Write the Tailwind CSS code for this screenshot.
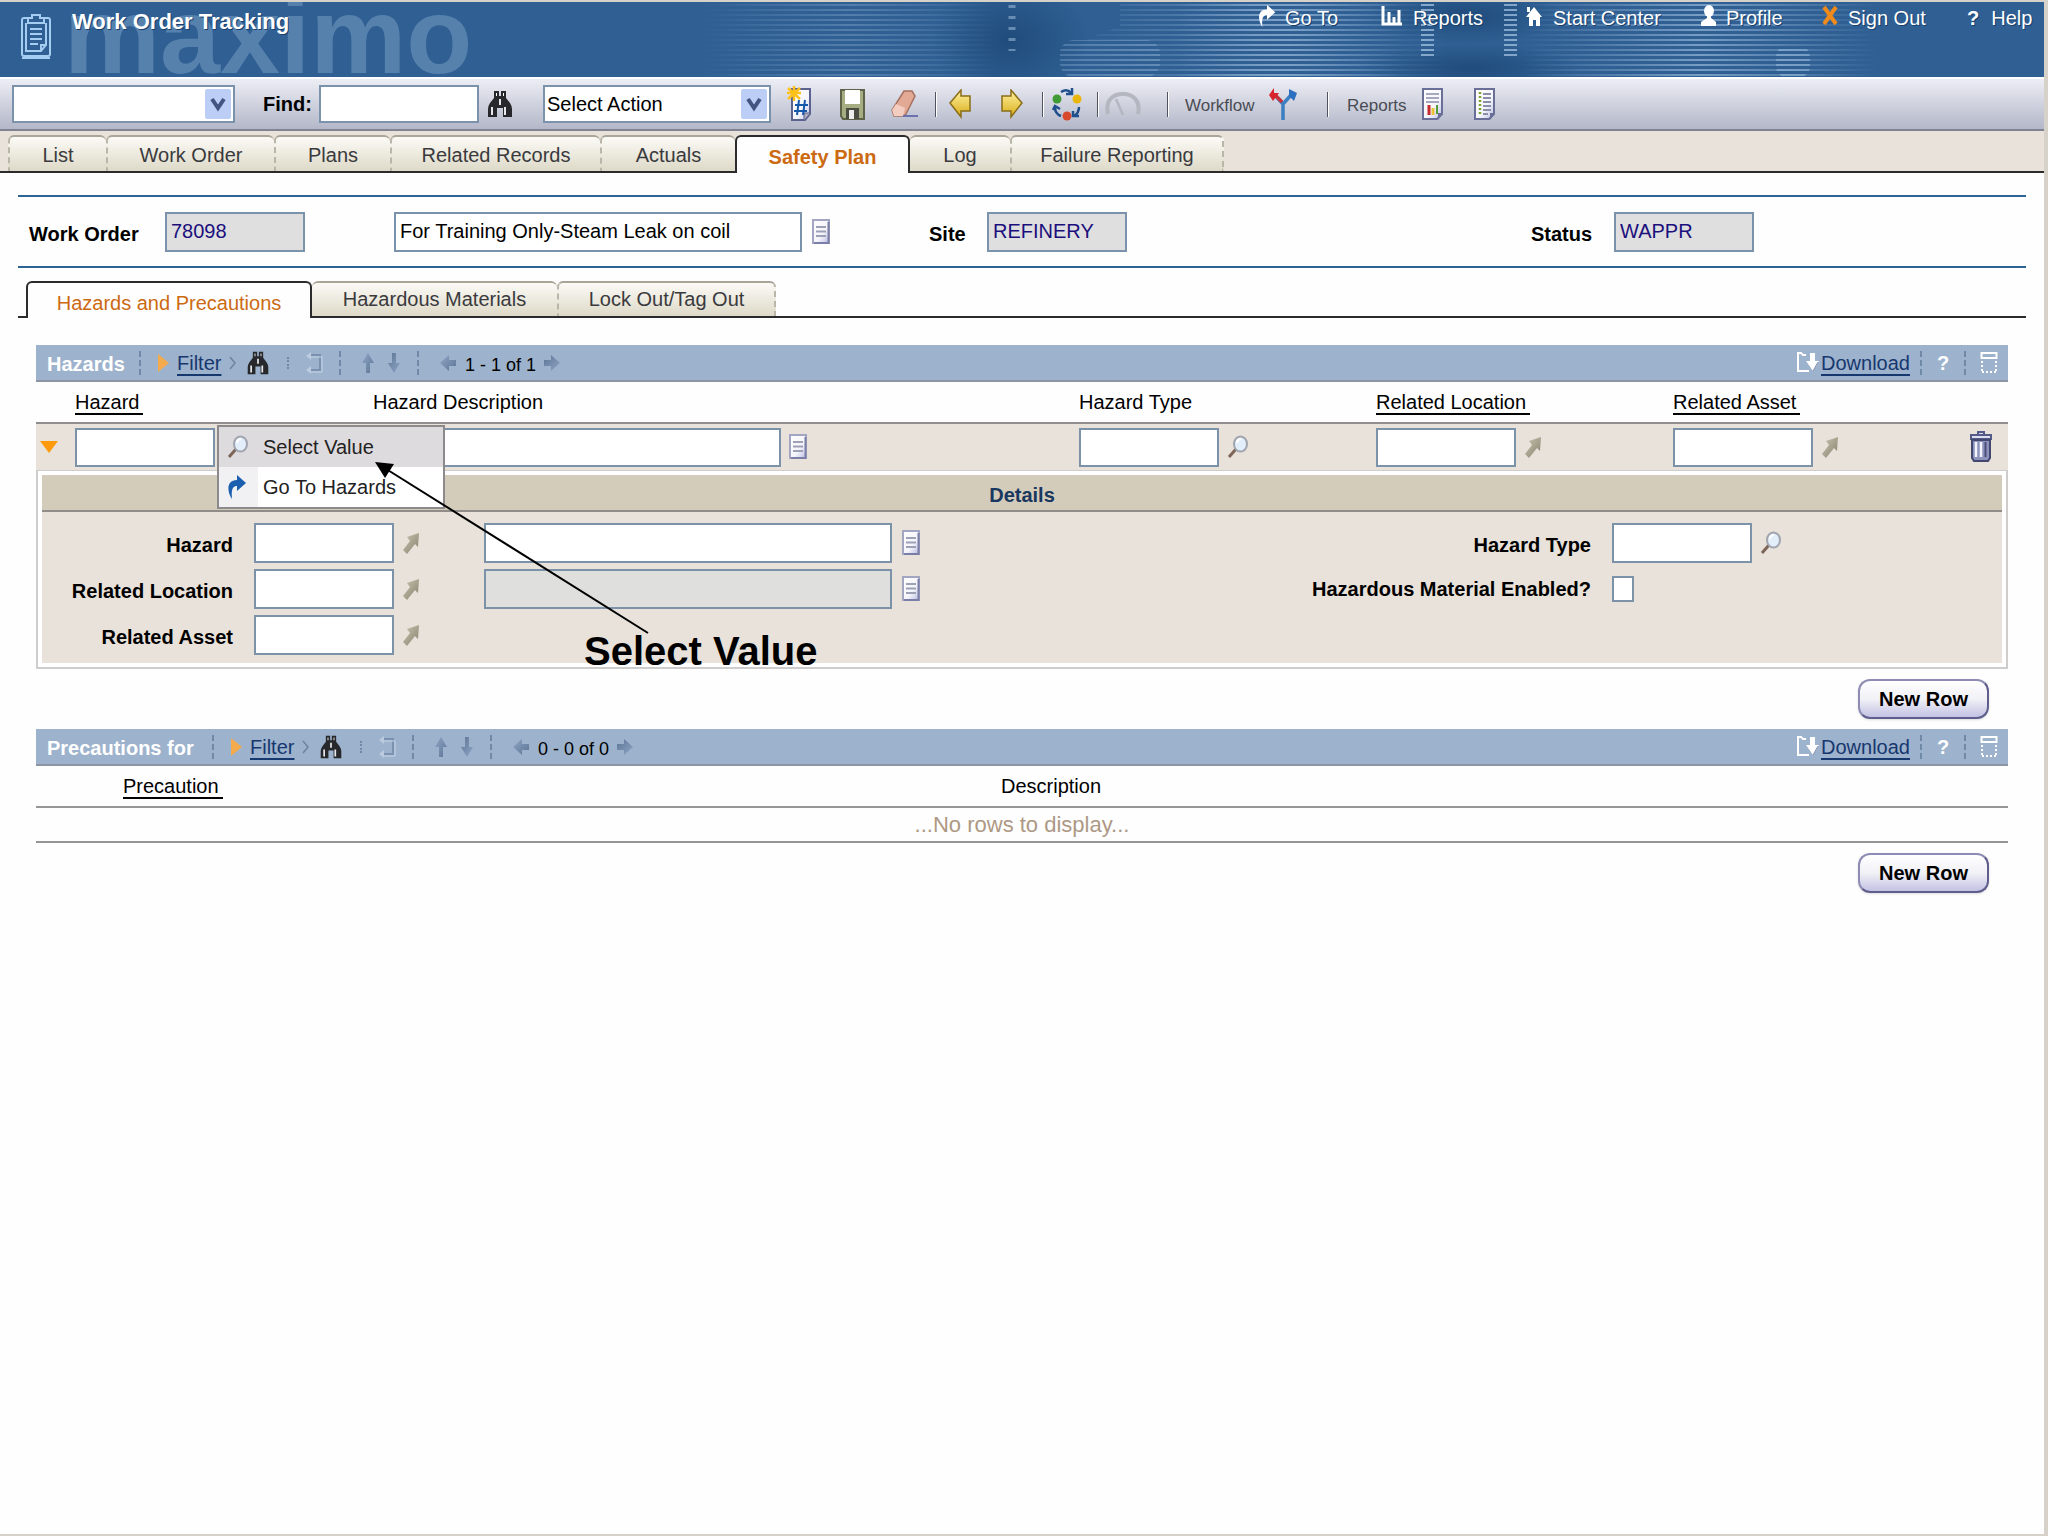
<!DOCTYPE html>
<html lang="en">
<head>
<meta charset="utf-8">
<title>Work Order Tracking</title>
<script src="https://cdn.jsdelivr.net/npm/@tailwindcss/browser@4"></script>
</head>
<body class="min-h-screen flex flex-col bg-[#fefefe] border-t-2 border-r-4 border-b-2 border-[#d6d2ca] font-['Liberation_Sans',Arial,sans-serif] text-[20px] leading-7 text-black">

<!-- Shared icons -->
<svg width="0" height="0" class="absolute" aria-hidden="true">
  <defs>
    <linearGradient id="gDoc" x1="0" y1="0" x2="1" y2="1"><stop offset="0" stop-color="#fff"/><stop offset=".6" stop-color="#f4f4fb"/><stop offset="1" stop-color="#b9bce0"/></linearGradient>
    <linearGradient id="gGold" x1="0" y1="0" x2="0" y2="1"><stop offset="0" stop-color="#fff3a0"/><stop offset="1" stop-color="#d9ac18"/></linearGradient>
    <linearGradient id="gSteel" x1="0" y1="0" x2="1" y2="1"><stop offset="0" stop-color="#8fa6c6"/><stop offset="1" stop-color="#5d7595"/></linearGradient>
    <linearGradient id="gTan" x1="0" y1="0" x2="1" y2="1"><stop offset="0" stop-color="#c9c5b0"/><stop offset="1" stop-color="#86826f"/></linearGradient>
  </defs>
  <symbol id="binoculars" viewBox="0 0 26 28">
    <path d="M7 1h5v5h2V1h5v7l4 5q2 3 2 6v8h-9v-9h-6v9H1v-8q0-3 2-6l4-5z" fill="#26282c"/>
    <path d="M4 17h2v8H4zM17 17h2v8h-2zM12 9h2v6h-2z" fill="#e8e8ec"/>
    <path d="M9 3h1v3H9zM16 3h1v3h-1z" fill="#fff"/>
  </symbol>
  <symbol id="note" viewBox="0 0 18 26">
    <rect x="1" y="1" width="16" height="23" fill="url(#gDoc)" stroke="#a3a6c2" stroke-width="2"/>
    <path d="M16.500 3v21H2" fill="none" stroke="#7b7ea6" stroke-width="2"/>
    <path d="M4 8h10M4 12.500h10M4 17h10" stroke="#9da1b6" stroke-width="2"/>
  </symbol>
  <symbol id="lens" viewBox="0 0 22 24">
    <path d="M2 22l7-8" stroke="#7c6557" stroke-width="3"/>
    <ellipse cx="13.500" cy="9" rx="6.500" ry="7.500" fill="#e3eefb" stroke="#9fa4ae" stroke-width="2"/>
    <path d="M10 8c0-3 2-4 4-4" stroke="#fff" stroke-width="2" fill="none"/>
  </symbol>
  <symbol id="goto" viewBox="0 0 18 24">
    <path d="M17 2L5 6l3 4-7 9 4 4 8-10 3 3z" fill="url(#gTan)"/>
  </symbol>
  <symbol id="jump" viewBox="0 0 20 26">
    <path d="M10 1l9 8-9 8v-5c-4 0-6 3-5 13C0 18-1 6 10 6z"/>
  </symbol>
  <symbol id="vsort" viewBox="0 0 14 22"><path d="M7 1l6 10H9v10H5V11H1z" fill="url(#gSteel)"/></symbol>
  <symbol id="hpage" viewBox="0 0 18 18"><path d="M1 9l9-8v5h7v6h-7v5z" fill="url(#gSteel)"/></symbol>
  <symbol id="clear" viewBox="0 0 18 22"><path d="M4 3h11v15H4" fill="none" stroke="#7a91b0" stroke-width="2"/><path d="M6 5h11v15H6" fill="none" stroke="#c7d5e6" stroke-width="1"/><path d="M1 4l5-4v8zM1 18l5-4v8z" fill="#bccbdf"/></symbol>
  <symbol id="download" viewBox="0 0 24 24">
    <path d="M10 4H7L5 2H2v18h11" fill="none" stroke="#fff" stroke-width="2"/>
    <path d="M14 2h5v8h4l-6 10-7-10h4z" fill="#fff"/><path d="M22 11l-5 9" stroke="#8791b0" stroke-width="1"/>
  </symbol>
  <symbol id="collapse" viewBox="0 0 18 24">
    <rect x="1.500" y="2" width="15" height="5" fill="none" stroke="#fff" stroke-width="2"/>
    <path d="M2 10v12M16 10v12M2 21h15" fill="none" stroke="#fff" stroke-width="2" stroke-dasharray="2 2"/>
  </symbol>
  <symbol id="chevron" viewBox="0 0 26 30">
    <rect width="26" height="30" rx="2" fill="#bccdf6"/><path d="M7 10l6 9 6-9" fill="none" stroke="#42547f" stroke-width="4"/>
  </symbol>
</svg>

<header class="relative h-[75px] shrink-0 overflow-hidden bg-[#2f5f93] text-white">
  <svg class="absolute inset-0 h-full w-full" viewBox="0 0 2044 75" preserveAspectRatio="xMaxYMin slice" aria-hidden="true">
    <defs>
      <pattern id="lines" width="8" height="5" patternUnits="userSpaceOnUse"><rect y="2" width="8" height="2" fill="#a9c8e6"/></pattern>
      <linearGradient id="fade"><stop offset="0" stop-color="#fff" stop-opacity="0"/><stop offset=".5" stop-color="#fff"/><stop offset="1" stop-color="#fff" stop-opacity="0"/></linearGradient>
      <mask id="mFade" maskContentUnits="objectBoundingBox"><rect width="1" height="1" fill="url(#fade)"/></mask>
      <radialGradient id="dark"><stop offset="0" stop-color="#163f6c" stop-opacity=".6"/><stop offset="1" stop-color="#163f6c" stop-opacity="0"/></radialGradient>
    </defs>
    <ellipse cx="1010" cy="38" rx="80" ry="60" fill="url(#dark)"/>
    <ellipse cx="1470" cy="66" rx="110" ry="24" fill="url(#dark)"/>
    <ellipse cx="1465" cy="14" rx="100" ry="28" fill="url(#dark)"/>
    <rect x="700" width="300" height="75" fill="url(#lines)" opacity=".3" mask="url(#mFade)"/>
    <path d="M1060 75c4-24 22-40 60-50v-25h330v75z" fill="url(#lines)" opacity=".4" mask="url(#mFade)"/>
    <rect x="1060" y="38" width="100" height="37" rx="14" fill="url(#lines)" opacity=".28"/>
    <rect x="1175" y="0" width="230" height="75" fill="url(#lines)" opacity=".45" mask="url(#mFade)"/>
    <rect x="1520" y="0" width="360" height="75" fill="url(#lines)" opacity=".6" mask="url(#mFade)"/>
    <rect x="1776" y="44" width="34" height="31" rx="10" fill="url(#lines)" opacity=".45"/>
    <rect x="1421" width="13" height="55" fill="url(#lines)" opacity=".7"/>
    <rect x="1504" width="13" height="55" fill="url(#lines)" opacity=".7"/>
    <path d="M1012 3v46" stroke="#a9c8e6" stroke-width="7" stroke-dasharray="3 8" opacity=".5"/>
  </svg>
  <span class="absolute -top-5 left-16 text-[108px] leading-[108px] font-bold text-[#87abcf]/45" aria-hidden="true">maximo</span>
  <div class="relative flex">
    <svg class="ml-5 mt-2.5 h-12 w-8" viewBox="0 0 32 48" fill="none" stroke="#a5cdf2" stroke-width="2" aria-hidden="true">
      <path d="M8 6H4q-2 0-2 2v34q0 2 2 2h24q2 0 2-2V8q0-2-2-2h-4M12 3h8v3h4v5H8V6h4zM6 11v28h15l5-6V11M21 39v-6h5M2 46h28"/><path d="M10 17h12M10 22h12M10 27h12M10 32h8"/>
    </svg>
    <h1 class="ml-5 mt-1.5 text-[22px] leading-7 font-bold [text-shadow:1px_1px_0_#17406d]">Work Order Tracking</h1>
    <nav class="ml-auto mt-0.5 flex leading-7 [text-shadow:1px_1px_0_#17406d]">
      <a href="#" class="flex w-31 gap-2"><svg class="h-6 w-5" fill="#fff" aria-hidden="true"><use href="#jump"/></svg>Go To</a>
      <a href="#" class="flex w-36 gap-2.5"><svg class="h-6 w-[22px]" viewBox="0 0 22 24" fill="none" stroke="#fff" stroke-width="3" aria-hidden="true"><path d="M2 2v18h19"/><path d="M8 8v11M13 13v6M18 6v13"/></svg>Reports</a>
      <a href="#" class="flex w-[175px] gap-2.5"><svg class="h-6 w-[18px]" viewBox="0 0 18 24" fill="#fff" aria-hidden="true"><path d="M9 3l8 10h-2v9h-4v-6H8v6H4v-9H1zM2 3h3v5H2z"/></svg>Start Center</a>
      <a href="#" class="flex w-[122px] gap-2"><svg class="h-6 w-[18px]" viewBox="0 0 18 24" fill="#fff" aria-hidden="true"><ellipse cx="9" cy="7" rx="5" ry="6"/><path d="M7 11h4v3l5 4v4H1v-4l6-4z"/></svg>Profile</a>
      <a href="#" class="flex w-[145px] gap-2.5"><svg class="h-6 w-4" viewBox="0 0 16 24" stroke="#ef8a1b" stroke-width="4" aria-hidden="true"><path d="M2 3l12 17M14 3L2 20"/></svg>Sign Out</a>
      <a href="#" class="flex w-[77px] gap-3"><b>?</b>Help</a>
    </nav>
  </div>
</header>

<div class="flex h-[54px] shrink-0 items-center border-t-2 border-b-2 border-t-white border-b-[#7f8393] bg-linear-to-b from-[#edeef5] to-[#b3b7c8] pl-3">
  <div class="relative w-[223px]">
    <select aria-label="Saved query" class="block h-[38px] w-full appearance-none border-2 border-[#7b92ad] bg-white"><option></option></select>
    <svg class="pointer-events-none absolute top-1 right-1 h-[30px] w-[26px]" aria-hidden="true"><use href="#chevron"/></svg>
  </div>
  <label for="find" class="ml-7 w-14 font-bold">Find:</label>
  <input id="find" class="h-[38px] w-40 border-2 border-[#7b92ad] bg-white px-1">
  <button class="ml-2" aria-label="Find"><svg class="block h-7 w-[26px]"><use href="#binoculars"/></svg></button>
  <div class="relative ml-[30px] w-[228px]">
    <select aria-label="Action" class="block h-[38px] w-full appearance-none border-2 border-[#7b92ad] bg-white px-0.5"><option>Select Action</option></select>
    <svg class="pointer-events-none absolute top-1 right-1 h-[30px] w-[26px]" aria-hidden="true"><use href="#chevron"/></svg>
  </div>
  <button class="ml-4 w-[52px]" aria-label="New work order"><svg class="block h-[36px] w-[26px]" viewBox="0 0 26 36"><path d="M5 3h18v25l-5 6H5z" fill="url(#gDoc)" stroke="#5c6290" stroke-width="2"/><path d="M23 27h-6v7" fill="#aab" stroke="#5c6290"/><path d="M12 14l-2 15M18 14l-2 15M8 19h13M7 25h13" stroke="#1557a8" stroke-width="2"/><path d="M7 0v15M1 2l12 11M13 2L1 13M0 7h14" stroke="#ffc21a" stroke-width="2.500"/></svg></button>
  <button class="w-[51px]" aria-label="Save"><svg class="block h-8 w-7" viewBox="0 0 28 32"><path d="M2 2h23v29H4l-2-3z" fill="#a7ad83" stroke="#5d6248" stroke-width="2"/><path d="M6 2h15v14H6z" fill="#fff"/><path d="M7 20h13v11H7z" fill="#4a4e42"/><path d="M10 22h5v9h-5z" fill="#eee"/></svg></button>
  <button class="w-[45px]" aria-label="Clear changes"><svg class="block h-8 w-[30px]" viewBox="0 0 30 32"><path d="M14 3h8l3 5-9 18-3 2H4l-2-6z" fill="#e2aa95" stroke="#a5705f" stroke-width="1.500"/><path d="M2 22l4-6 9 4-2 8H4z" fill="#f3cdbf"/><path d="M13 28h15" stroke="#6a70b0" stroke-width="2"/></svg></button>
  <i class="h-[25px] w-0.5 border-r border-l border-r-white border-l-[#50525c]"></i>
  <button class="ml-3 w-[52px]" aria-label="Previous record"><svg class="block h-[30px] w-[22px]" viewBox="0 0 22 30"><path d="M1 14L12 1v6h9v15h-9v6z" fill="url(#gGold)" stroke="#8a6d18" stroke-width="1.500"/></svg></button>
  <button class="w-[41px]" aria-label="Next record"><svg class="block h-[30px] w-[22px]" viewBox="0 0 22 30"><path d="M21 14L10 1v6H1v15h9v6z" fill="url(#gGold)" stroke="#8a6d18" stroke-width="1.500"/></svg></button>
  <i class="h-[25px] w-0.5 border-r border-l border-r-white border-l-[#50525c]"></i>
  <button class="ml-2 w-[45px]" aria-label="Change status"><svg class="block h-[34px] w-[30px]" viewBox="0 0 30 34"><circle cx="5" cy="12" r="4.500" fill="#3f9b33"/><circle cx="25" cy="12" r="4.500" fill="#e9b60e"/><circle cx="15" cy="29" r="4.500" fill="#d8482c"/><path d="M9 5q6-4 10 1M20 1v6h-6M3 20q0 7 6 9M1 23l2-4 5 3M27 20q0 6-5 9M21 24v5h6" fill="none" stroke="#1f4f8c" stroke-width="2.500"/></svg></button>
  <i class="h-[25px] w-0.5 border-r border-l border-r-white border-l-[#50525c]"></i>
  <button class="ml-1.5 w-[62px]" aria-label="Gauge"><svg class="block h-7 w-9" viewBox="0 0 36 28" fill="none" stroke="#b4b6c0" stroke-width="4"><path d="M3 24C0 10 8 4 18 4s18 7 15 20"/><path d="M11 9l7 16" stroke-width="2.500"/></svg></button>
  <i class="h-[25px] w-0.5 border-r border-l border-r-white border-l-[#50525c]"></i>
  <span class="ml-4 w-[83px] pt-1 text-[17px] text-[#4a4c54]">Workflow</span>
  <button class="w-[59px]" aria-label="Route workflow"><svg class="block h-[34px] w-[30px]" viewBox="0 0 30 34" fill="none"><path d="M15 33V17L6 7M15 17l9-10" stroke="#3c7fc0" stroke-width="3.500"/><path d="M14 15L7 8" stroke="#c8333b" stroke-width="3.500"/><path d="M1 8l5-7v5h5l-6 8z" fill="#d8242c"/><path d="M21 2l8 4-3 8-5-5z" fill="#2b6fc0"/></svg></button>
  <i class="h-[25px] w-0.5 border-r border-l border-r-white border-l-[#50525c]"></i>
  <span class="ml-[18px] w-[74px] pt-1 text-[17px] text-[#4a4c54]">Reports</span>
  <button class="w-[52px]" aria-label="Run reports"><svg class="block h-[34px] w-6" viewBox="0 0 24 34"><path d="M2 2h19v25l-5 5H2z" fill="url(#gDoc)" stroke="#6a6f97" stroke-width="2"/><path d="M5 7h13M5 11h13M5 15h13" stroke="#8a8ea8" stroke-width="1.500"/><path d="M8 18v10" stroke="#c62a2a" stroke-width="3"/><path d="M12 21v7" stroke="#e9c23a" stroke-width="3"/><path d="M16 18v9" stroke="#4f9a3c" stroke-width="2"/><path d="M22 26h-5v7z" fill="#6a6f97"/></svg></button>
  <button aria-label="Report list"><svg class="block h-[34px] w-6" viewBox="0 0 24 34"><path d="M2 2h19v25l-5 5H2z" fill="url(#gDoc)" stroke="#6a6f97" stroke-width="2"/><path d="M10 7h8M10 11h8M10 15h8M10 19h8M10 23h8M10 27h5" stroke="#8a8ea8" stroke-width="2"/><path d="M7 5v24" stroke="#7aa32c" stroke-width="2.500" stroke-dasharray="2 2"/><path d="M22 26h-5v7z" fill="#6a6f97"/></svg></button>
</div>

<nav class="flex h-[42px] shrink-0 items-end border-b-2 border-[#2b2b2b] bg-[#e8e2da] pl-2 text-[#3a3a3e]" aria-label="Main tabs">
  <a href="#" class="h-9 w-[98px] rounded-t-md border-t-2 border-l-2 border-t-[#a9a598] border-l-[#b9b5a8] [border-left-style:dashed] bg-linear-to-b from-[#fbfaf6] to-[#dedac8] pt-1 text-center">List</a>
  <a href="#" class="h-9 w-[168px] rounded-t-md border-t-2 border-l-2 border-t-[#a9a598] border-l-[#b9b5a8] [border-left-style:dashed] bg-linear-to-b from-[#fbfaf6] to-[#dedac8] pt-1 text-center">Work Order</a>
  <a href="#" class="h-9 w-[116px] rounded-t-md border-t-2 border-l-2 border-t-[#a9a598] border-l-[#b9b5a8] [border-left-style:dashed] bg-linear-to-b from-[#fbfaf6] to-[#dedac8] pt-1 text-center">Plans</a>
  <a href="#" class="h-9 w-[210px] rounded-t-md border-t-2 border-l-2 border-t-[#a9a598] border-l-[#b9b5a8] [border-left-style:dashed] bg-linear-to-b from-[#fbfaf6] to-[#dedac8] pt-1 text-center">Related Records</a>
  <a href="#" class="h-9 w-[135px] rounded-t-md border-t-2 border-l-2 border-t-[#a9a598] border-l-[#b9b5a8] [border-left-style:dashed] bg-linear-to-b from-[#fbfaf6] to-[#dedac8] pt-1 text-center">Actuals</a>
  <a href="#" aria-current="page" class="-mb-0.5 h-[38px] w-[175px] rounded-t-md border-2 border-b-0 border-[#2b2b2b] bg-[#fefefe] pt-1.5 text-center font-bold text-[#cc6a12]">Safety Plan</a>
  <a href="#" class="h-9 w-[100px] rounded-t-md border-t-2 border-t-[#a9a598] bg-linear-to-b from-[#fbfaf6] to-[#dedac8] pt-1 text-center">Log</a>
  <a href="#" class="h-9 w-[214px] rounded-t-md border-t-2 border-r-2 border-l-2 border-t-[#a9a598] border-x-[#b9b5a8] [border-left-style:dashed] [border-right-style:dashed] bg-linear-to-b from-[#fbfaf6] to-[#dedac8] pt-1 text-center">Failure Reporting</a>
</nav>

<main class="pt-[22px] pr-[18px] pl-[18px]">
  <section class="grid h-[73px] grid-cols-[136px_229px_535fr_58px_544fr_83px_412px] items-center border-y-2 border-[#2f6394] pl-[11px]">
    <label for="wo" class="pt-1 font-bold">Work Order</label>
    <div><input id="wo" readonly value="78098" class="block h-10 w-35 border-2 border-[#7b92ad] bg-[#dfdfe0] px-1 text-[#1b0f7c]"></div>
    <div class="flex items-center gap-2.5"><input aria-label="Work order description" value="For Training Only-Steam Leak on coil" class="h-10 w-[408px] border-2 border-[#7b92ad] bg-white px-1"><button aria-label="Long description"><svg class="block h-[26px] w-[18px]"><use href="#note"/></svg></button></div>
    <label for="site" class="pt-1 font-bold">Site</label>
    <div><input id="site" readonly value="REFINERY" class="block h-10 w-35 border-2 border-[#7b92ad] bg-[#dfdfe0] px-1 text-[#1b0f7c]"></div>
    <label for="status" class="pt-1 font-bold">Status</label>
    <div><input id="status" readonly value="WAPPR" class="block h-10 w-35 border-2 border-[#7b92ad] bg-[#dfdfe0] px-1 text-[#1b0f7c]"></div>
  </section>

  <nav class="mt-[13px] flex h-[37px] items-end border-b-2 border-[#2b2b2b] pl-2 text-[#3a3a3e]" aria-label="Safety plan tabs">
    <a href="#" aria-current="page" class="-mb-0.5 h-[37px] w-[286px] rounded-t-md border-2 border-b-0 border-[#2b2b2b] bg-[#fefefe] pt-1.5 text-center text-[#cc6a12]">Hazards and Precautions</a>
    <a href="#" class="h-[35px] w-[245px] rounded-t-md border-t-2 border-t-[#a9a598] bg-linear-to-b from-[#fbfaf6] to-[#dedac8] pt-0.5 text-center">Hazardous Materials</a>
    <a href="#" class="h-[35px] w-[219px] rounded-t-md border-t-2 border-r-2 border-l-2 border-t-[#a9a598] border-x-[#b9b5a8] [border-left-style:dashed] [border-right-style:dashed] bg-linear-to-b from-[#fbfaf6] to-[#dedac8] pt-0.5 text-center">Lock Out/Tag Out</a>
  </nav>

  <div class="mt-[27px] mr-[18px] ml-[18px]">
    <section>
      <div class="flex h-[37px] items-center border-b-2 border-[#8f95a3] bg-[#9db2cc] pl-[11px]">
        <h2 class="w-[92px] pt-0.5 font-bold text-white">Hazards</h2>
        <i class="h-6 border-l-2 border-dashed border-[#7189a8]"></i>
        <svg class="ml-4 h-[18px] w-3" viewBox="0 0 12 18" aria-hidden="true"><path d="M1 0l11 9L1 18z" fill="#f3ab4e"/></svg>
        <a href="#" class="ml-2 w-12 text-[#17376f] underline decoration-2 underline-offset-4">Filter</a>
        <svg class="ml-1 h-4 w-2" viewBox="0 0 8 16" fill="none" stroke="#71839c" stroke-width="1.500" aria-hidden="true"><path d="M1 2l5 6-5 6"/></svg>
        <button class="ml-2" aria-label="Search hazards"><svg class="block h-6 w-[26px]"><use href="#binoculars"/></svg></button>
        <i class="ml-4 h-3 border-l-2 border-dotted border-[#7189a8]"></i>
        <button class="ml-4" aria-label="Clear filter"><svg class="block h-[22px] w-[18px]"><use href="#clear"/></svg></button>
        <i class="ml-4 h-6 border-l-2 border-dashed border-[#7189a8]"></i>
        <button class="ml-5" aria-label="Previous row"><svg class="block h-[22px] w-3.5"><use href="#vsort"/></svg></button>
        <button class="ml-3" aria-label="Next row"><svg class="block h-[22px] w-3.5 rotate-180"><use href="#vsort"/></svg></button>
        <i class="ml-4 h-6 border-l-2 border-dashed border-[#7189a8]"></i>
        <button class="ml-5" aria-label="Previous page"><svg class="block h-[18px] w-[18px]"><use href="#hpage"/></svg></button>
        <span class="ml-2 w-[78px] pt-1 text-[18px]">1 - 1 of 1</span>
        <button aria-label="Next page"><svg class="block h-[18px] w-[18px] rotate-180"><use href="#hpage"/></svg></button>
        <svg class="ml-auto h-6 w-6" aria-hidden="true"><use href="#download"/></svg>
        <a href="#" class="w-[100px] pl-px text-[#17376f] underline decoration-2 underline-offset-4">Download</a>
        <i class="h-6 border-l-2 border-dashed border-[#7189a8]"></i>
        <button class="w-[42px] font-bold text-white" aria-label="Help">?</button>
        <i class="h-6 border-l-2 border-dashed border-[#7189a8]"></i>
        <button class="mr-2.5 ml-3.5" aria-label="Collapse table"><svg class="block h-6 w-[18px]"><use href="#collapse"/></svg></button>
      </div>

      <table class="w-full table-fixed text-left">
        <colgroup><col class="w-[39px]"><col class="w-[298px]"><col><col class="w-[297px]"><col class="w-[297px]"><col class="w-[297px]"><col class="w-[38px]"></colgroup>
        <thead>
          <tr class="h-[41px] border-b-2 border-[#908d8c]">
            <th></th>
            <th class="font-normal"><a href="#" class="border-b-2 border-black pr-1 leading-6">Hazard</a></th>
            <th class="font-normal">Hazard Description</th>
            <th class="font-normal">Hazard Type</th>
            <th class="font-normal"><a href="#" class="border-b-2 border-black pr-1 leading-6">Related Location</a></th>
            <th class="font-normal"><a href="#" class="border-b-2 border-black pr-1 leading-6">Related Asset</a></th>
            <th></th>
          </tr>
        </thead>
        <tbody>
          <tr class="h-[47px] bg-[#e8e2da]">
            <td><button class="ml-1 block" aria-label="Hide details"><svg class="block h-3 w-[18px]" viewBox="0 0 18 12"><path d="M0 0h18L9 12z" fill="#ff9a0a"/></svg></button></td>
            <td class="relative">
              <input aria-label="Hazard" class="block h-[39px] w-35 border-2 border-[#7b92a8] bg-white px-1">
              <!-- Field menu and its callout -->
              <div role="menu" class="absolute top-px left-[142px] z-10 flex w-[228px] flex-col border-2 border-[#8d8a8c] bg-white text-[#222]">
                <button role="menuitem" class="flex h-10 items-center bg-[#dedbde] pl-2 text-left"><svg class="mr-3.5 h-6 w-[22px]"><use href="#lens"/></svg>Select Value</button>
                <button role="menuitem" class="flex h-10 items-center bg-linear-to-r from-[#f1f1f3] from-[39px] to-white to-[39px] pl-2 text-left"><svg class="mr-4 h-[26px] w-5" fill="#1c5fae"><use href="#jump"/></svg>Go To Hazards</button>
              </div>
              <svg class="pointer-events-none absolute top-[38px] left-[300px] z-20 h-[174px] w-[276px]" viewBox="0 0 276 174" aria-hidden="true"><path d="M8 5l265 166" stroke="#000" stroke-width="2"/><path d="M0 0l19 2-9 14z"/></svg>
              <p class="pointer-events-none absolute top-[205px] left-[509px] z-20 text-[40px] leading-[44px] font-bold whitespace-nowrap">Select Value</p>
            </td>
            <td><div class="flex items-center gap-2"><input aria-label="Hazard description" class="h-[39px] w-[408px] border-2 border-[#7b92a8] bg-white px-1"><button aria-label="Long description"><svg class="block h-[26px] w-[18px]"><use href="#note"/></svg></button></div></td>
            <td><div class="flex items-center gap-2"><input aria-label="Hazard type" class="h-[39px] w-35 border-2 border-[#7b92a8] bg-white px-1"><button aria-label="Select hazard type"><svg class="block h-6 w-[22px]"><use href="#lens"/></svg></button></div></td>
            <td><div class="flex items-center gap-2"><input aria-label="Related location" class="h-[39px] w-35 border-2 border-[#7b92a8] bg-white px-1"><button aria-label="Location menu"><svg class="block h-6 w-[18px]"><use href="#goto"/></svg></button></div></td>
            <td><div class="flex items-center gap-2"><input aria-label="Related asset" class="h-[39px] w-35 border-2 border-[#7b92a8] bg-white px-1"><button aria-label="Asset menu"><svg class="block h-6 w-[18px]"><use href="#goto"/></svg></button></div></td>
            <td><button class="block" aria-label="Delete row"><svg class="block h-8 w-[22px]" viewBox="0 0 22 32"><path d="M8 4V1h6v3M1 4h20v4H1z" fill="#dcdff0" stroke="#555b88" stroke-width="2"/><path d="M2 9h18v18l-2 3H4l-2-3z" fill="#8d93bd" stroke="#43486f" stroke-width="2"/><path d="M6 11v15M11 11v15" stroke="#f2f3fb" stroke-width="2.500"/><path d="M15.500 11v15" stroke="#4b5079" stroke-width="2"/></svg></button></td>
          </tr>
        </tbody>
      </table>

      <div class="border-2 border-t border-[#cfcccc] bg-white p-1">
        <h3 class="h-[37px] border-b-2 border-[#8f8c8a] bg-[#d4ccba] pt-1.5 text-center font-bold text-[#19375f]">Details</h3>
        <div class="flex h-[151px] justify-between bg-[#e8e2da] pt-[11px]">
          <div class="grid grid-cols-[191px_auto_auto] content-start gap-x-[21px] gap-y-1.5">
            <label for="dHazard" class="pt-2 text-right font-bold">Hazard</label>
            <div class="flex items-center gap-2"><input id="dHazard" class="h-10 w-35 border-2 border-[#7b92a8] bg-white px-1"><button aria-label="Hazard menu"><svg class="block h-6 w-[18px]"><use href="#goto"/></svg></button></div>
            <div class="ml-[43px] flex items-center gap-2.5"><input aria-label="Hazard description" class="h-10 w-[408px] border-2 border-[#7b92a8] bg-white px-1"><button aria-label="Long description"><svg class="block h-[26px] w-[18px]"><use href="#note"/></svg></button></div>
            <label for="dLocation" class="pt-2 text-right font-bold">Related Location</label>
            <div class="flex items-center gap-2"><input id="dLocation" class="h-10 w-35 border-2 border-[#7b92a8] bg-white px-1"><button aria-label="Location menu"><svg class="block h-6 w-[18px]"><use href="#goto"/></svg></button></div>
            <div class="ml-[43px] flex items-center gap-2.5"><input readonly aria-label="Location description" class="h-10 w-[408px] border-2 border-[#7b92a8] bg-[#dfdfde] px-1"><button aria-label="Long description"><svg class="block h-[26px] w-[18px]"><use href="#note"/></svg></button></div>
            <label for="dAsset" class="pt-2 text-right font-bold">Related Asset</label>
            <div class="flex items-center gap-2"><input id="dAsset" class="h-10 w-35 border-2 border-[#7b92a8] bg-white px-1"><button aria-label="Asset menu"><svg class="block h-6 w-[18px]"><use href="#goto"/></svg></button></div>
          </div>
          <div class="grid grid-cols-[auto_390px] content-start gap-x-[21px] gap-y-1.5">
            <label for="dType" class="pt-2 text-right font-bold">Hazard Type</label>
            <div class="flex items-center gap-2"><input id="dType" class="h-10 w-35 border-2 border-[#7b92a8] bg-white px-1"><button aria-label="Select hazard type"><svg class="block h-6 w-[22px]"><use href="#lens"/></svg></button></div>
            <label for="dEnabled" class="flex h-10 items-center justify-end font-bold">Hazardous Material Enabled?</label>
            <div class="flex h-10 items-center"><input id="dEnabled" type="checkbox" class="h-[26px] w-[22px] appearance-none border-2 border-[#7b92a8] bg-white"></div>
          </div>
        </div>
      </div>
      <div class="flex h-[60px] justify-end pt-2.5 pr-[19px]">
        <button class="h-10 w-[131px] rounded-xl border-2 border-[#8e8cb4] border-r-[#5f5d8c] border-b-[#5f5d8c] bg-linear-to-b from-white via-[#f1f1f6] to-[#c3c2e4] font-bold shadow-sm">New Row</button>
      </div>
    </section>

    <section>
      <div class="flex h-[37px] items-center border-b-2 border-[#8f95a3] bg-[#9db2cc] pl-[11px]">
        <h2 class="w-[165px] pt-0.5 font-bold text-white">Precautions for</h2>
        <i class="h-6 border-l-2 border-dashed border-[#7189a8]"></i>
        <svg class="ml-4 h-[18px] w-3" viewBox="0 0 12 18" aria-hidden="true"><path d="M1 0l11 9L1 18z" fill="#f3ab4e"/></svg>
        <a href="#" class="ml-2 w-12 text-[#17376f] underline decoration-2 underline-offset-4">Filter</a>
        <svg class="ml-1 h-4 w-2" viewBox="0 0 8 16" fill="none" stroke="#71839c" stroke-width="1.500" aria-hidden="true"><path d="M1 2l5 6-5 6"/></svg>
        <button class="ml-2" aria-label="Search precautions"><svg class="block h-6 w-[26px]"><use href="#binoculars"/></svg></button>
        <i class="ml-4 h-3 border-l-2 border-dotted border-[#7189a8]"></i>
        <button class="ml-4" aria-label="Clear filter"><svg class="block h-[22px] w-[18px]"><use href="#clear"/></svg></button>
        <i class="ml-4 h-6 border-l-2 border-dashed border-[#7189a8]"></i>
        <button class="ml-5" aria-label="Previous row"><svg class="block h-[22px] w-3.5"><use href="#vsort"/></svg></button>
        <button class="ml-3" aria-label="Next row"><svg class="block h-[22px] w-3.5 rotate-180"><use href="#vsort"/></svg></button>
        <i class="ml-4 h-6 border-l-2 border-dashed border-[#7189a8]"></i>
        <button class="ml-5" aria-label="Previous page"><svg class="block h-[18px] w-[18px]"><use href="#hpage"/></svg></button>
        <span class="ml-2 w-[78px] pt-1 text-[18px]">0 - 0 of 0</span>
        <button aria-label="Next page"><svg class="block h-[18px] w-[18px] rotate-180"><use href="#hpage"/></svg></button>
        <svg class="ml-auto h-6 w-6" aria-hidden="true"><use href="#download"/></svg>
        <a href="#" class="w-[100px] pl-px text-[#17376f] underline decoration-2 underline-offset-4">Download</a>
        <i class="h-6 border-l-2 border-dashed border-[#7189a8]"></i>
        <button class="w-[42px] font-bold text-white" aria-label="Help">?</button>
        <i class="h-6 border-l-2 border-dashed border-[#7189a8]"></i>
        <button class="mr-2.5 ml-3.5" aria-label="Collapse table"><svg class="block h-6 w-[18px]"><use href="#collapse"/></svg></button>
      </div>
      <table class="w-full table-fixed text-left">
        <colgroup><col class="w-[87px]"><col class="w-[878px]"><col></colgroup>
        <thead>
          <tr class="h-[41px] border-b-2 border-[#989595]">
            <th></th>
            <th class="font-normal"><a href="#" class="border-b-2 border-black pr-1 leading-6">Precaution</a></th>
            <th class="font-normal">Description</th>
          </tr>
        </thead>
        <tbody>
          <tr class="h-[35px] border-b-2 border-[#989595]"><td colspan="3" class="text-center text-[22px] text-[#ad9985]">...No rows to display...</td></tr>
        </tbody>
      </table>
      <div class="flex h-[60px] justify-end pt-2.5 pr-[19px]">
        <button class="h-10 w-[131px] rounded-xl border-2 border-[#8e8cb4] border-r-[#5f5d8c] border-b-[#5f5d8c] bg-linear-to-b from-white via-[#f1f1f6] to-[#c3c2e4] font-bold shadow-sm">New Row</button>
      </div>
    </section>
  </div>
</main>
</body>
</html>
